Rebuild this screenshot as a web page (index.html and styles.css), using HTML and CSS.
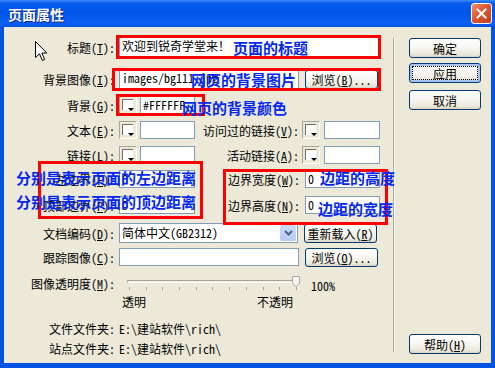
FILE: index.html
```html
<!DOCTYPE html>
<html>
<head>
    <meta charset="utf-8">
    <title>页面属性</title>
    <link rel="stylesheet" href="styles.css">
</head>
<body>

<div class="window">
    <div class="titlebar">
        <span class="caption">页面属性</span>
        <span class="close-btn">
            <svg width="11" height="11" viewBox="0 0 11 11"><path d="M1.5 1.5L9.5 9.5M9.5 1.5L1.5 9.5" stroke="#fff" stroke-width="2" stroke-linecap="square"/></svg>
        </span>
    </div>

    <div class="client">
        <!-- Поля формы -->
        <div class="form">
            <div class="row row-title">
                <span class="lbl">标题(<u>T</u>):</span>
                <span class="edit w-long">欢迎到锐奇学堂来！</span>
            </div>
            <div class="row row-bgimg">
                <span class="lbl">背景图像(<u>I</u>):</span>
                <span class="edit w-mid">images/bg111.jpg</span>
                <span class="btn btn-side">浏览(<u>B</u>)...</span>
            </div>
            <div class="row">
                <span class="lbl">背景(<u>G</u>):</span>
                <span class="swatch"></span>
                <span class="edit w-color">#FFFFFF</span>
            </div>
            <div class="row">
                <span class="lbl">文本(<u>E</u>):</span>
                <span class="swatch"></span>
                <span class="edit w-color"></span>
                <span class="lbl2">访问过的链接(<u>V</u>):</span>
                <span class="swatch"></span>
                <span class="edit w-color2"></span>
            </div>
            <div class="row">
                <span class="lbl">链接(<u>L</u>):</span>
                <span class="swatch"></span>
                <span class="edit w-color"></span>
                <span class="lbl2">活动链接(<u>A</u>):</span>
                <span class="swatch"></span>
                <span class="edit w-color2"></span>
            </div>
            <div class="row row-m1">
                <span class="lbl">左边界(<u>F</u>):</span>
                <span class="edit w-margin">0</span>
                <span class="lbl3">边界宽度(<u>W</u>):</span>
                <span class="edit w-margin2">0</span>
            </div>
            <div class="row row-m2">
                <span class="lbl">顶部边界(<u>P</u>):</span>
                <span class="edit w-margin">0</span>
                <span class="lbl3">边界高度(<u>N</u>):</span>
                <span class="edit w-margin2">0</span>
            </div>
            <div class="row row-enc">
                <span class="lbl">文档编码(<u>D</u>):</span>
                <span class="select">
                    <span class="select-val">简体中文(GB2312)</span>
                    <span class="select-arrow">
                        <svg width="9" height="6" viewBox="0 0 9 6"><path d="M1 1L4.5 4.5L8 1" fill="none" stroke="#4d6185" stroke-width="2"/></svg>
                    </span>
                </span>
                <span class="btn btn-side">重新载入(<u>R</u>)</span>
            </div>
            <div class="row row-trace">
                <span class="lbl">跟踪图像(<u>C</u>):</span>
                <span class="edit w-mid"></span>
                <span class="btn btn-side">浏览(<u>O</u>)...</span>
            </div>
            <div class="row row-alpha">
                <span class="lbl">图像透明度(<u>M</u>):</span>
                <div class="slider">
                    <div class="track"></div>
                    <div class="ticks">
                        <i></i><i></i><i></i><i></i><i></i><i></i><i></i><i></i><i></i><i></i><i></i>
                    </div>
                    <svg class="thumb" width="8" height="11" viewBox="0 0 8 11"><path d="M0.5 0.5H7.5V7L4 10.5L0.5 7Z" fill="#f7f7f4" stroke="#a9a79c"/></svg>
                </div>
                <span class="pct">100%</span>
            </div>
            <div class="row row-scale">
                <span>透明</span>
                <span>不透明</span>
            </div>
            <div class="row row-dir">
                <span class="lbl">文件文件夹:</span>
                <span>E:\建站软件\rich\</span>
            </div>
            <div class="row row-site">
                <span class="lbl">站点文件夹:</span>
                <span>E:\建站软件\rich\</span>
            </div>
        </div>

        <div class="sep"></div>

        <!-- Кнопки справа -->
        <div class="side">
            <span class="btn">确定</span>
            <span class="btn btn-default">应用</span>
            <span class="btn btn-cancel">取消</span>
            <span class="btn btn-help">帮助(<u>H</u>)</span>
        </div>
    </div>

    <!-- Пометки поверх диалога -->
    <svg class="cursor" width="13" height="21" viewBox="0 0 13 21"><path d="M0.5 0.5V16.5L4.5 12.8L7.3 19.5L9.6 18.5L6.9 12H11.8Z" fill="#fff" stroke="#000"/></svg>

    <div class="mark mark-title"></div>
    <div class="mark mark-bgimg"></div>
    <div class="mark mark-bg"></div>
    <div class="mark mark-left"></div>
    <div class="mark mark-right"></div>

    <span class="note note-title">页面的标题</span>
    <span class="note note-bgimg">网页的背景图片</span>
    <span class="note note-bg">网页的背景颜色</span>
    <span class="note note-left1">分别是表示页面的左边距离</span>
    <span class="note note-left2">分别是表示页面的顶边距离</span>
    <span class="note note-right1">边距的高度</span>
    <span class="note note-right2">边距的宽度</span>
</div>

</body>
</html>
```

FILE: styles.css
```css
body {
    margin: 0;
    font-family: "Noto Sans Mono CJK SC", "Noto Sans CJK SC", sans-serif;
    font-size: 12px;
    color: #000;
    background: #fff;
}
u { text-decoration: underline; text-underline-offset: 1px; }

.window {
    position: relative;
    width: 495px;
    height: 368px;
    display: flex;
    flex-direction: column;
    background: #0553e2;
    overflow: hidden;
}
.titlebar {
    height: 27px;
    flex: none;
    display: flex;
    align-items: center;
    padding: 0 3px 0 8px;
    background: linear-gradient(#3d8ef6 0, #0a5cf0 3px, #0055e9 45%, #0a60f2 85%, #0052e2 100%);
}
.caption {
    color: #fff;
    font: bold 14px "Noto Sans CJK SC", sans-serif;
    text-shadow: 1px 1px 0 #0b1f8a;
}
.close-btn {
    margin-left: auto;
    width: 21px;
    height: 21px;
    box-sizing: border-box;
    border: 1px solid #fff;
    border-radius: 3px;
    background: linear-gradient(135deg, #ec9277 0%, #dc5631 45%, #c33e1b 100%);
    display: flex;
    align-items: center;
    justify-content: center;
}

.client {
    flex: 1;
    display: flex;
    margin: 0 4px 5px;
    background: #ece9d8;
}
.form { width: 389px; flex: none; }

.row {
    display: flex;
    align-items: center;
    height: 18px;
    margin-top: 7px;
    white-space: nowrap;
}
.row-title { margin-top: 10px; height: 20px; }
.row-bgimg { margin-top: 12px; height: 20px; }
.row-m1 { margin-top: 6px; }
.row-m2 { margin-top: 8px; }
.row-enc { margin-top: 9px; height: 20px; }
.row-trace { margin-top: 5px; }
.row-alpha { margin-top: 9px; height: 16px; }
.row-scale {
    margin: 3px 0 0 118px;
    height: 14px;
    width: 171px;
    justify-content: space-between;
}
.row-dir { margin-top: 12px; height: 16px; }
.row-site { margin-top: 4px; height: 16px; }

.lbl {
    width: 111px;
    flex: none;
    text-align: right;
    margin-right: 4px;
}
.lbl2 {
    width: 104px;
    flex: none;
    text-align: right;
    margin-right: 3px;
}
.lbl3 {
    width: 105px;
    flex: none;
    text-align: right;
    margin-right: 5px;
}

.edit {
    box-sizing: border-box;
    height: 100%;
    background: #fff;
    border: 1px solid #7f9db9;
    padding: 0 2px;
    line-height: 16px;
    overflow: hidden;
    flex: none;
}
.w-long { width: 260px; }
.w-mid { width: 180px; }
.w-color { width: 55px; margin-left: 3px; }
.w-color2 { width: 56px; margin-left: 4px; }
.w-margin { width: 76px; }
.w-margin2 { width: 75px; }

.swatch {
    position: relative;
    flex: none;
    width: 18px;
    height: 18px;
    box-sizing: border-box;
    border: 1px solid;
    border-color: #a7a499 #fff #fff #a7a499;
    background: #ece9d8;
}
.swatch::before {
    content: '';
    position: absolute;
    left: 2px;
    top: 2px;
    width: 10px;
    height: 10px;
    background: #fff;
    border-top: 1px solid #716f64;
    border-left: 1px solid #716f64;
}
.swatch::after {
    content: '';
    position: absolute;
    right: 2px;
    bottom: 2px;
    border-left: 3px solid transparent;
    border-right: 3px solid transparent;
    border-top: 3px solid #000;
}

.select {
    box-sizing: border-box;
    display: flex;
    width: 179px;
    height: 20px;
    background: #fff;
    border: 1px solid #7f9db9;
    flex: none;
}
.select-val { flex: 1; padding-left: 2px; line-height: 18px; }
.select-arrow {
    width: 16px;
    margin: 1px;
    border-radius: 2px;
    background: linear-gradient(#cddcfd, #b6caf7);
    display: flex;
    align-items: center;
    justify-content: center;
}

.btn {
    box-sizing: border-box;
    width: 72px;
    height: 20px;
    flex: none;
    border: 1px solid #003c74;
    border-radius: 3px;
    background: linear-gradient(#fff 0%, #f6f5f0 50%, #ebe8dc 85%, #d7d1c3 100%);
    display: flex;
    align-items: center;
    justify-content: center;
}
.btn-side { width: 73px; height: 19px; margin-left: 6px; }
.btn-default {
    position: relative;
    margin-top: 5px;
    box-shadow: inset 0 0 0 2px #a9c3ee;
}
.btn-default::after {
    content: '';
    position: absolute;
    inset: 2px;
    border: 1px dotted #000;
}
.btn-cancel { margin-top: 7px; }
.btn-help { margin-top: auto; }

.slider {
    position: relative;
    width: 181px;
    height: 16px;
    flex: none;
}
.track {
    margin: 5px 0 0 8px;
    width: 170px;
    height: 3px;
    box-sizing: border-box;
    border: 1px solid;
    border-color: #a7a499 #fff #fff #a7a499;
    background: #f1efe6;
}
.ticks {
    display: flex;
    justify-content: space-between;
    margin: 4px 0 0 10px;
    width: 168px;
}
.ticks i { width: 1px; height: 3px; background: #a7a499; }
.thumb { position: absolute; left: 173px; top: 1px; }
.pct { margin-left: 11px; padding-top: 5px; }

.sep {
    width: 1px;
    flex: none;
    margin: 11px 0;
    background: #aca899;
    border-right: 1px solid #fff;
}
.side {
    flex: 1;
    display: flex;
    flex-direction: column;
    padding: 11px 0 9px 14px;
}

/* пометки */
.cursor { position: absolute; left: 35px; top: 41px; }
.mark {
    position: absolute;
    box-sizing: border-box;
    border: 3px solid #ff0000;
}
.mark-title { left: 116px; top: 35px; width: 265px; height: 24px; }
.mark-bgimg { left: 112px; top: 68px; width: 269px; height: 23px; }
.mark-bg { left: 116px; top: 94px; width: 89px; height: 22px; }
.mark-left { left: 38px; top: 161px; width: 165px; height: 58px; }
.mark-right { left: 223px; top: 169px; width: 165px; height: 56px; }

.note {
    position: absolute;
    font: bold 15px/15px "Noto Sans CJK SC", sans-serif;
    color: #0528f0;
    white-space: nowrap;
}
.note-title { left: 233px; top: 40px; }
.note-bgimg { left: 191px; top: 72px; }
.note-bg { left: 182px; top: 100px; }
.note-left1 { left: 16px; top: 170px; }
.note-left2 { left: 16px; top: 194px; }
.note-right1 { left: 320px; top: 170px; }
.note-right2 { left: 318px; top: 201px; }
```
